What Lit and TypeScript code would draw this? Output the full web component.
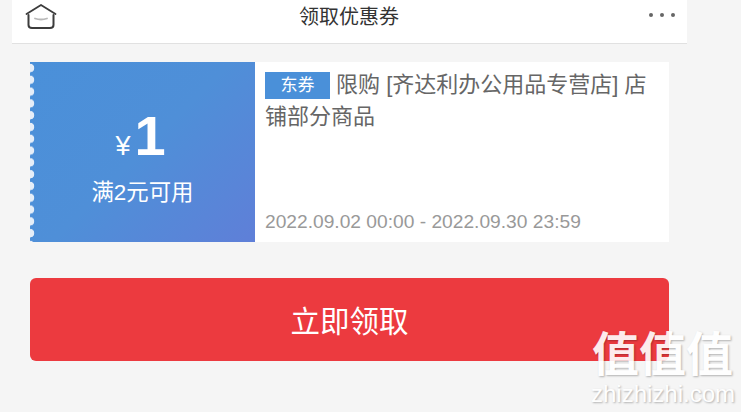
import { LitElement, html, css } from "lit";
import { customElement } from "lit/decorators.js";

@customElement("app-root")
export class AppRoot extends LitElement {
    render() {
        return html`
            <div class="page">
                <header class="bar">
                    <svg class="home" viewBox="0 0 32 26" width="32" height="26" fill="none">
                        <path d="M1.5 11 L16 2 L30.5 11" stroke="#3c3c3c" stroke-width="1.8" stroke-linecap="round" stroke-linejoin="round"></path>
                        <path d="M3.5 12 V22 Q3.5 25 7 25 H25 Q28.5 25 28.5 22 V12" stroke="#3c3c3c" stroke-width="2" stroke-linecap="round"></path>
                        <path d="M10 15.5 Q16 17.5 22 15.5" stroke="#b8b8b8" stroke-width="1.8" stroke-linecap="round"></path>
                    </svg>
                    <span class="title">领取优惠券</span>
                    <span class="dots"><i></i><i></i><i></i></span>
                </header>
                <main class="content">
                    <section class="coupon">
                        <div class="value">
                            <div class="amount"><span class="yen">¥</span><span class="num">1</span></div>
                            <div class="cond">满2元可用</div>
                        </div>
                        <div class="info">
                            <div class="desc"><span class="tag">东券</span> 限购 [齐达利办公用品专营店] 店铺部分商品</div>
                            <div class="date">2022.09.02 00:00 - 2022.09.30 23:59</div>
                        </div>
                    </section>
                    <button class="claim">立即领取</button>
                </main>
                <div class="mark">
                    <div class="mark-cn">值值值</div>
                    <div class="mark-en">zhizhizhi.com</div>
                </div>
            </div>
        `;
    }

    static styles = css`
        :host {
            display: block;
            font-family: "Liberation Sans", "Noto Sans CJK SC", sans-serif;
        }
        .page {
            position: relative;
            width: 741px;
            height: 412px;
            overflow: hidden;
            box-sizing: border-box;
            padding: 0 54px 0 12px;
            background: #f5f5f5;
        }
        .bar {
            display: flex;
            align-items: center;
            justify-content: space-between;
            height: 44px;
            box-sizing: border-box;
            padding: 0 12px 0 13px;
            background: #fff;
            border-bottom: 1px solid #e1e1e1;
            position: relative;
        }
        .home {
            margin-top: -12px;
        }
        .title {
            position: absolute;
            left: -1px;
            right: 0;
            top: 3px;
            text-align: center;
            font-size: 20px;
            line-height: 28px;
            color: #333;
        }
        .dots {
            display: flex;
            gap: 7px;
            margin-top: -13px;
        }
        .dots i {
            width: 4px;
            height: 4px;
            border-radius: 50%;
            background: #666;
        }
        .content {
            display: flex;
            flex-direction: column;
            gap: 36px;
            padding: 18px 18px 0;
        }
        .coupon {
            display: flex;
            height: 180px;
            background: #fff;
        }
        .value {
            position: relative;
            width: 225px;
            flex: none;
            display: flex;
            flex-direction: column;
            align-items: center;
            justify-content: center;
            color: #fff;
            background: linear-gradient(135deg, #4a90d9 0%, #4f8fd8 50%, #5f7fd8 100%);
        }
        .value::before {
            content: "";
            position: absolute;
            left: 0;
            top: 0;
            bottom: 0;
            width: 5px;
            background: radial-gradient(circle at 0 6px, #e6eef8 0 4px, transparent 4.6px) 0 0 / 5px 11.8px repeat-y;
        }
        .amount {
            display: flex;
            align-items: baseline;
            height: 56px;
            margin-top: 12px;
            margin-left: -4px;
        }
        .yen {
            font-size: 27px;
            margin-right: 4px;
        }
        .num {
            font-size: 56px;
            font-weight: 700;
            line-height: 56px;
        }
        .cond {
            font-size: 22.4px;
            line-height: 30px;
            margin-top: 14px;
        }
        .info {
            flex: 1;
            display: flex;
            flex-direction: column;
            justify-content: space-between;
            padding: 7px 10px 8px;
        }
        .desc {
            font-size: 22px;
            line-height: 32px;
            color: #666;
        }
        .tag {
            display: inline-block;
            width: 65px;
            height: 27px;
            line-height: 27px;
            text-align: center;
            font-size: 17px;
            color: #fff;
            background: #4a90d9;
            vertical-align: 1px;
        }
        .date {
            font-size: 19.2px;
            line-height: 24px;
            color: #999;
        }
        .claim {
            display: block;
            width: 100%;
            height: 83px;
            padding: 0 0 2px;
            border: none;
            border-radius: 6px;
            background: #ec3a3f;
            color: #fff;
            font: inherit;
            font-size: 29.5px;
        }
        .mark {
            position: absolute;
            left: 591px;
            top: 327px;
            width: 143px;
            color: #fff;
            text-align: center;
            opacity: 0.9;
            text-shadow: 1px 1px 2px rgba(0, 0, 0, 0.3);
        }
        .mark-cn {
            font-size: 47px;
            font-weight: 700;
            line-height: 55px;
            white-space: nowrap;
        }
        .mark-en {
            font-size: 24px;
            line-height: 24px;
            white-space: nowrap;
        }
    `;
}
